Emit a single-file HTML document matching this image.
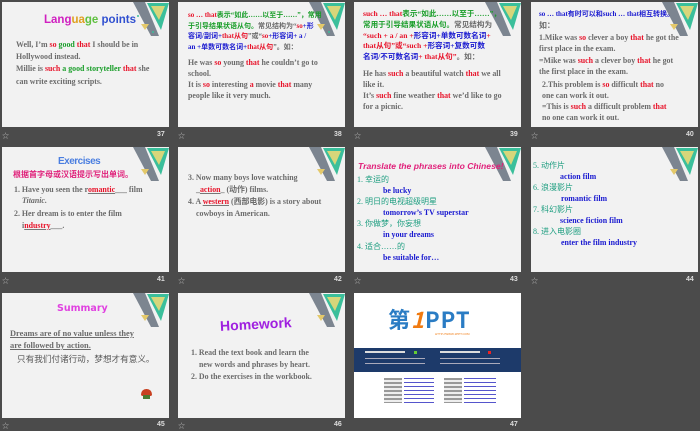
<!DOCTYPE html>
<html><head><meta charset="utf-8"><style>
*{margin:0;padding:0;box-sizing:border-box}
body{width:700px;height:431px;background:#4b4b4b;position:relative;overflow:hidden;font-family:"Liberation Serif","Noto Serif CJK SC",serif}
.s{position:absolute;width:167px;height:125px;background:#f2f2f2;overflow:hidden}
.s .d{position:absolute;right:0;top:0}
.t{position:absolute;font-size:7.9px;font-weight:bold;color:#6b6b6b;line-height:11px;white-space:nowrap}
.r{color:#e8132a}.g{color:#1a9e2a}.b{color:#1a1ad0}
.n{position:absolute;color:#ddd;font:bold 7px "Liberation Sans",sans-serif}
.st{position:absolute;color:#bbb;font:7px "Noto Sans CJK SC",sans-serif}
.cn{font-family:"Liberation Serif","Noto Sans CJK SC",sans-serif}
</style></head><body>

<div class="s" style="left:2px;top:2px">
<svg class="d" width="36" height="36" viewBox="0 0 36 36"><polygon points="0,0 12,0 26,34 18,34" fill="#7c8590"/><polygon points="14,1 36,1 28,28" fill="#3bbf9b"/><polygon points="18,4 32,4 26,18" fill="#d7d67a"/><polygon points="8,22 16,22 12,28" fill="#e4c96a"/><circle cx="20" cy="30" r="1" fill="#3bbf9b"/><circle cx="5" cy="14" r="1" fill="#3bbf9b"/></svg>
<div style="position:absolute;left:42px;top:12px;font:bold 11.5px 'Liberation Sans',sans-serif;white-space:nowrap"><span style="color:#d020c0">Lang</span><span style="color:#e0a020">ua</span><span style="color:#60c040">ge</span> <span style="color:#3050d0">points</span></div>
<div class="t" style="left:14px;top:37px">Well, I’m <span class="r">so</span> <span class="g">good</span> <span class="r">that</span> I should be in</div>
<div class="t" style="left:14px;top:49px">Hollywood instead.</div>
<div class="t" style="left:14px;top:61px">Millie is <span class="r">such</span> <span class="g">a good storyteller</span> <span class="r">that</span> she</div>
<div class="t" style="left:14px;top:74px">can write exciting scripts.</div>
</div>
<div class="st" style="left:2px;top:131px">☆</div><div class="n" style="left:157px;top:131px">37</div>

<div class="s" style="left:178px;top:2px">
<svg class="d" width="36" height="36" viewBox="0 0 36 36"><polygon points="0,0 12,0 26,34 18,34" fill="#7c8590"/><polygon points="14,1 36,1 28,28" fill="#3bbf9b"/><polygon points="18,4 32,4 26,18" fill="#d7d67a"/><polygon points="8,22 16,22 12,28" fill="#e4c96a"/><circle cx="20" cy="30" r="1" fill="#3bbf9b"/></svg>
<div class="t cn" style="left:10px;top:8px;font-size:7px;line-height:10.5px"><span class="r">so … that</span><span class="g">表示“如此……以至于……”，常用</span><br><span class="g">于引导结果状语从句。</span>常见结构为“<span class="r">so</span><span class="b">+形</span><br><span class="b">容词/副词+</span><span class="r">that从句</span>”或“<span class="r">so</span><span class="b">+形容词+ a /</span><br><span class="b">an +单数可数名词+</span><span class="r">that从句</span>”。如：</div>
<div class="t" style="left:10px;top:55px">He was <span class="r">so</span> young <span class="r">that</span> he couldn’t go to</div>
<div class="t" style="left:10px;top:66px">school.</div>
<div class="t" style="left:10px;top:77px">It is <span class="r">so</span> interesting <span class="r">a</span> movie <span class="r">that</span> many</div>
<div class="t" style="left:10px;top:88px">people like it very much.</div>
</div>
<div class="st" style="left:178px;top:131px">☆</div><div class="n" style="left:334px;top:131px">38</div>

<div class="s" style="left:354px;top:2px">
<svg class="d" width="36" height="36" viewBox="0 0 36 36"><polygon points="0,0 12,0 26,34 18,34" fill="#7c8590"/><polygon points="14,1 36,1 28,28" fill="#3bbf9b"/><polygon points="18,4 32,4 26,18" fill="#d7d67a"/></svg>
<div class="t cn" style="left:9px;top:7px;font-size:7.6px;line-height:10.8px"><span class="r">such … that</span><span class="g">表示“如此……以至于……”，</span><br><span class="g">常用于引导结果状语从句。</span>常见结构为<br><span class="r">“such + a / an +</span><span class="b">形容词+单数可数名词</span><span class="r">+</span><br><span class="r">that从句”或“such +</span><span class="b">形容词+复数可数</span><br><span class="b">名词/不可数名词</span><span class="r">+ that从句”</span>。如：</div>
<div class="t" style="left:9px;top:66px">He has <span class="r">such</span> a beautiful watch <span class="r">that</span> we all</div>
<div class="t" style="left:9px;top:77px">like it.</div>
<div class="t" style="left:9px;top:88px">It’s <span class="r">such</span> fine weather <span class="r">that</span> we’d like to go</div>
<div class="t" style="left:9px;top:99px">for a picnic.</div>
</div>
<div class="st" style="left:354px;top:131px">☆</div><div class="n" style="left:510px;top:131px">39</div>

<div class="s" style="left:531px;top:2px">
<svg class="d" width="36" height="36" viewBox="0 0 36 36"><polygon points="0,0 12,0 26,34 18,34" fill="#7c8590"/><polygon points="14,1 36,1 28,28" fill="#3bbf9b"/><polygon points="18,4 32,4 26,18" fill="#d7d67a"/><polygon points="8,22 16,22 12,28" fill="#e4c96a"/></svg>
<div class="t cn b" style="left:8px;top:7px;font-size:7px">so … that有时可以和such … that相互转换。</div>
<div class="t cn" style="left:8px;top:18px">如：</div>
<div class="t" style="left:8px;top:30px">1.Mike was <span class="r">so</span> clever a boy <span class="r">that</span> he got the</div>
<div class="t" style="left:8px;top:41px">first place in the exam.</div>
<div class="t" style="left:8px;top:53px">=Mike was <span class="r">such</span> a clever boy <span class="r">that</span> he got</div>
<div class="t" style="left:8px;top:64px">the first place in the exam.</div>
<div class="t" style="left:11px;top:77px">2.This problem is <span class="r">so</span> difficult <span class="r">that</span> no</div>
<div class="t" style="left:11px;top:88px">one can work it out.</div>
<div class="t" style="left:11px;top:99px">=This is <span class="r">such</span> a difficult problem <span class="r">that</span></div>
<div class="t" style="left:11px;top:110px">no one can work it out.</div>
</div>
<div class="st" style="left:531px;top:131px">☆</div><div class="n" style="left:686px;top:131px">40</div>

<div class="s" style="left:2px;top:147px">
<svg class="d" width="36" height="36" viewBox="0 0 36 36"><polygon points="0,0 12,0 26,34 18,34" fill="#7c8590"/><polygon points="14,1 36,1 28,28" fill="#3bbf9b"/><polygon points="18,4 32,4 26,18" fill="#d7d67a"/><polygon points="8,22 16,22 12,28" fill="#e4c96a"/></svg>
<div style="position:absolute;left:56px;top:9px;font:bold 10px 'Liberation Sans',sans-serif;color:#4a7ee0;letter-spacing:-0.5px">Exercises</div>
<div class="t cn" style="left:11px;top:22px;color:#e0207a;font-size:8px">根据首字母或汉语提示写出单词。</div>
<div class="t" style="left:12px;top:37px">1. Have you seen the r<span class="r" style="text-decoration:underline;text-decoration-color:#777">omantic</span>___ film</div>
<div class="t" style="left:20px;top:48px;font-style:italic">Titanic.</div>
<div class="t" style="left:12px;top:61px">2. Her dream is to enter the film</div>
<div class="t" style="left:20px;top:73px">i<span class="r" style="text-decoration:underline;text-decoration-color:#777">ndustry</span>___.</div>
</div>
<div class="st" style="left:2px;top:276px">☆</div><div class="n" style="left:157px;top:276px">41</div>

<div class="s" style="left:178px;top:147px">
<svg class="d" width="36" height="36" viewBox="0 0 36 36"><polygon points="0,0 12,0 26,34 18,34" fill="#7c8590"/><polygon points="14,1 36,1 28,28" fill="#3bbf9b"/><polygon points="18,4 32,4 26,18" fill="#d7d67a"/><polygon points="8,22 16,22 12,28" fill="#e4c96a"/></svg>
<div class="t" style="left:10px;top:25px">3. Now many boys love watching</div>
<div class="t cn" style="left:18px;top:37px">_<span class="r" style="text-decoration:underline;text-decoration-color:#777">action</span>_ (动作) films.</div>
<div class="t cn" style="left:10px;top:49px">4. A <span class="r" style="text-decoration:underline;text-decoration-color:#777">western</span> (西部电影) is a story about</div>
<div class="t" style="left:18px;top:61px">cowboys in American.</div>
</div>
<div class="st" style="left:178px;top:276px">☆</div><div class="n" style="left:334px;top:276px">42</div>

<div class="s" style="left:354px;top:147px">
<svg class="d" width="36" height="36" viewBox="0 0 36 36"><polygon points="0,0 12,0 26,34 18,34" fill="#7c8590"/><polygon points="14,1 36,1 28,28" fill="#3bbf9b"/><polygon points="18,4 32,4 26,18" fill="#d7d67a"/></svg>
<div style="position:absolute;left:4px;top:14px;font:italic bold 8.6px 'Liberation Sans',sans-serif;color:#e0207a;white-space:nowrap">Translate the phrases into Chinese!</div>
<div class="t cn" style="left:3px;top:27px;color:#1e9e80;font-weight:normal;font-size:8px">1. 幸运的</div>
<div class="t b" style="left:29px;top:38px">be lucky</div>
<div class="t cn" style="left:3px;top:49px;color:#1e9e80;font-weight:normal;font-size:8px">2. 明日的电视超级明星</div>
<div class="t b" style="left:29px;top:60px">tomorrow’s TV superstar</div>
<div class="t cn" style="left:3px;top:71px;color:#1e9e80;font-weight:normal;font-size:8px">3. 你做梦，你妄想</div>
<div class="t b" style="left:29px;top:82px">in your dreams</div>
<div class="t cn" style="left:3px;top:94px;color:#1e9e80;font-weight:normal;font-size:8px">4. 适合……的</div>
<div class="t b" style="left:29px;top:105px">be suitable for…</div>
</div>
<div class="st" style="left:354px;top:276px">☆</div><div class="n" style="left:510px;top:276px">43</div>

<div class="s" style="left:531px;top:147px">
<svg class="d" width="36" height="36" viewBox="0 0 36 36"><polygon points="0,0 12,0 26,34 18,34" fill="#7c8590"/><polygon points="14,1 36,1 28,28" fill="#3bbf9b"/><polygon points="18,4 32,4 26,18" fill="#d7d67a"/><polygon points="8,22 16,22 12,28" fill="#e4c96a"/></svg>
<div class="t cn" style="left:2px;top:13px;color:#1e9e80;font-weight:normal;font-size:8px">5. 动作片</div>
<div class="t b" style="left:29px;top:24px">action film</div>
<div class="t cn" style="left:2px;top:35px;color:#1e9e80;font-weight:normal;font-size:8px">6. 浪漫影片</div>
<div class="t b" style="left:30px;top:46px">romantic film</div>
<div class="t cn" style="left:2px;top:57px;color:#1e9e80;font-weight:normal;font-size:8px">7. 科幻影片</div>
<div class="t b" style="left:29px;top:68px">science fiction film</div>
<div class="t cn" style="left:2px;top:79px;color:#1e9e80;font-weight:normal;font-size:8px">8. 进入电影圈</div>
<div class="t b" style="left:30px;top:90px">enter the film industry</div>
</div>
<div class="st" style="left:531px;top:276px">☆</div><div class="n" style="left:686px;top:276px">44</div>

<div class="s" style="left:2px;top:293px">
<svg class="d" width="36" height="36" viewBox="0 0 36 36"><polygon points="0,0 12,0 26,34 18,34" fill="#7c8590"/><polygon points="14,1 36,1 28,28" fill="#3bbf9b"/><polygon points="18,4 32,4 26,18" fill="#d7d67a"/><polygon points="8,22 16,22 12,28" fill="#e4c96a"/></svg>
<div style="position:absolute;left:55px;top:10px;font:bold 9.5px 'DejaVu Sans',sans-serif;color:#e040e0">Summary</div>
<div class="t" style="left:8px;top:35px;font-size:8.4px;text-decoration:underline;line-height:12px">Dreams are of no value unless they<br>are followed by action.</div>
<div class="t cn" style="left:15px;top:61px;font-weight:normal;color:#555;font-size:8.6px">只有我们付诸行动，梦想才有意义。</div>
<div style="position:absolute;left:139px;top:96px;width:11px;height:7px;border-radius:6px 6px 2px 2px;background:#c84020"></div>
<div style="position:absolute;left:141px;top:102px;width:7px;height:4px;background:#4a7a30"></div>
</div>
<div class="st" style="left:2px;top:421px">☆</div><div class="n" style="left:157px;top:421px">45</div>

<div class="s" style="left:178px;top:293px">
<svg class="d" width="36" height="36" viewBox="0 0 36 36"><polygon points="0,0 12,0 26,34 18,34" fill="#7c8590"/><polygon points="14,1 36,1 28,28" fill="#3bbf9b"/><polygon points="18,4 32,4 26,18" fill="#d7d67a"/><polygon points="8,22 16,22 12,28" fill="#e4c96a"/></svg>
<div style="position:absolute;left:42px;top:23px;font:bold 14px 'Liberation Sans',sans-serif;color:#a020e0;transform:rotate(-3deg)">Homework</div>
<div class="t" style="left:13px;top:54px">1. Read the text book and learn the</div>
<div class="t" style="left:21px;top:66px">new words and phrases by heart.</div>
<div class="t" style="left:13px;top:78px">2. Do the exercises in the workbook.</div>
</div>
<div class="st" style="left:178px;top:421px">☆</div><div class="n" style="left:334px;top:421px">46</div>

<div class="s" style="left:354px;top:293px;background:#fff">
<div style="position:absolute;left:34px;top:14px;font:bold 22px/24px 'Noto Sans CJK SC',sans-serif;color:#2a7cc4;letter-spacing:1px;white-space:nowrap">第<span style="color:#f07a10;font-style:italic">1</span>PPT</div>
<div style="position:absolute;left:81px;top:39px;font:3px sans-serif;color:#f07a10">HTTP://WWW.1PPT.COM</div>
<div style="position:absolute;left:0;top:55px;width:167px;height:24px;background:#1d3a6a"></div>
<div style="position:absolute;left:11px;top:58px;width:40px;height:2px;background:#ddd"></div>
<div style="position:absolute;left:60px;top:58px;width:3px;height:3px;background:#6c3"></div>
<div style="position:absolute;left:86px;top:58px;width:40px;height:2px;background:#ddd"></div>
<div style="position:absolute;left:134px;top:58px;width:3px;height:3px;background:#e22"></div>
<div style="position:absolute;left:11px;top:65px;width:60px;height:1px;background:#aab"></div>
<div style="position:absolute;left:11px;top:70px;width:60px;height:1px;background:#aab"></div>
<div style="position:absolute;left:86px;top:65px;width:60px;height:1px;background:#aab"></div>
<div style="position:absolute;left:86px;top:70px;width:60px;height:1px;background:#aab"></div>
<div style="position:absolute;left:30px;top:85px;width:18px;height:25px;background:repeating-linear-gradient(#999 0 2px,#eee 2px 4px)"></div>
<div style="position:absolute;left:50px;top:85px;width:30px;height:25px;background:repeating-linear-gradient(#55c 0 1px,#fff 1px 4px)"></div>
<div style="position:absolute;left:90px;top:85px;width:18px;height:25px;background:repeating-linear-gradient(#999 0 2px,#eee 2px 4px)"></div>
<div style="position:absolute;left:110px;top:85px;width:32px;height:25px;background:repeating-linear-gradient(#55c 0 1px,#fff 1px 4px)"></div>
</div>
<div class="n" style="left:510px;top:421px">47</div>
</body></html>
